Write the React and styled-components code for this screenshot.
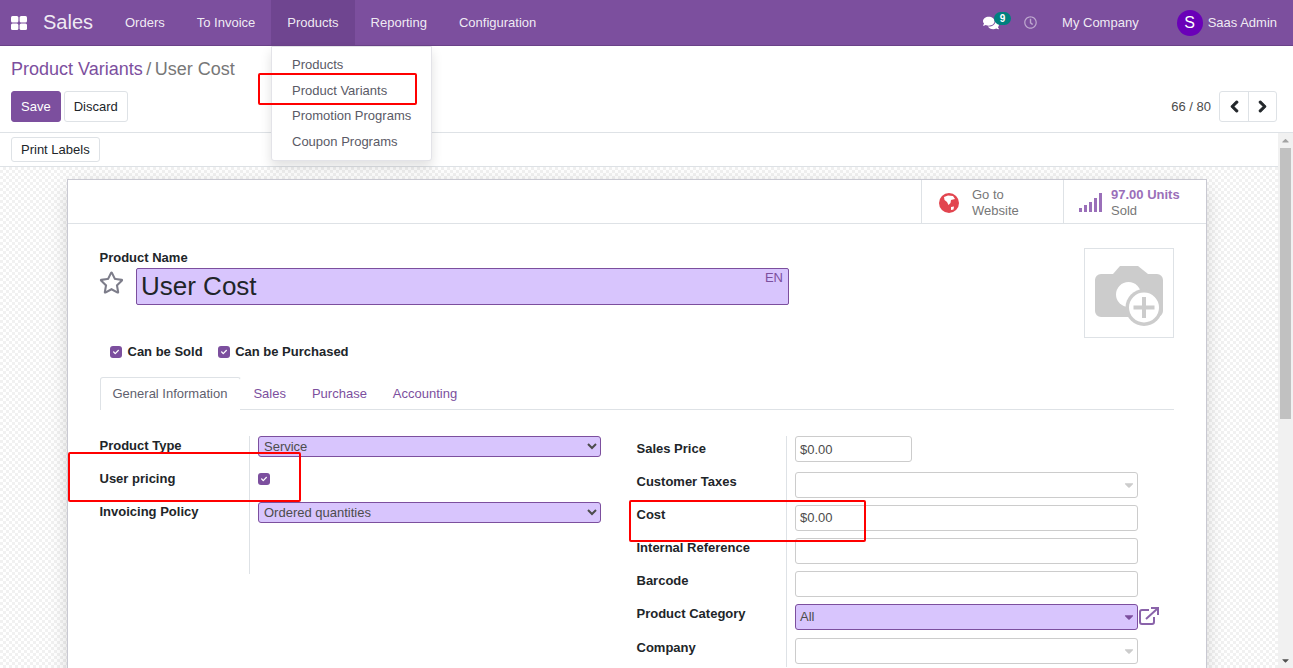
import styled, { createGlobalStyle } from 'styled-components'
import { FaComments, FaRegClock, FaChevronLeft, FaChevronRight, FaCheck, FaCaretDown, FaCaretUp, FaRegStar } from 'react-icons/fa'

const GlobalStyle = createGlobalStyle`
  html, body {
    margin: 0;
    height: 100%;
    overflow: hidden;
  }
  body {
    font-family: "Liberation Sans", Arial, sans-serif;
    font-size: 13px;
    color: #4c4c4c;
  }
  * { box-sizing: border-box; }
`

const Page = styled.div`
  position: relative;
  width: 1293px;
  height: 668px;
  display: flex;
  flex-direction: column;
  overflow: hidden;
  background: #fff;
`

const Navbar = styled.header`
  flex: none;
  height: 46px;
  display: flex;
  align-items: stretch;
  padding-left: 11px;
  background: #7c4f9e;
  border-bottom: 1px solid #6a4288;
  color: rgba(255, 255, 255, 0.9);
`

const AppsIcon = styled.svg`
  align-self: center;
  width: 16px;
  height: 14px;
  margin-right: 16px;
`

const Brand = styled.div`
  align-self: center;
  width: 66px;
  font-size: 20px;
`

const NavItem = styled.div`
  display: flex;
  align-items: center;
  padding: 0 16px;
  background: ${(props) => (props.active ? '#6f4590' : 'transparent')};
`

const NavRight = styled.div`
  margin-left: auto;
  display: flex;
  align-items: center;
  padding-right: 16px;
`

const ChatIcon = styled.div`
  position: relative;
  display: flex;
  width: 16px;
  margin-right: 25px;
  color: #fff;
  font-size: 16px;
`

const Badge = styled.span`
  position: absolute;
  top: -3px;
  left: 11px;
  width: 17px;
  height: 13px;
  border-radius: 7px;
  background: #00807f;
  color: #fff;
  font-size: 10px;
  font-weight: 700;
  line-height: 13px;
  text-align: center;
`

const ClockIcon = styled.div`
  display: flex;
  margin-right: 25px;
  color: rgba(255, 255, 255, 0.5);
  font-size: 13px;
`

const Company = styled.div`
  margin-right: 38px;
`

const Avatar = styled.div`
  width: 26px;
  height: 26px;
  margin-right: 5px;
  border-radius: 50%;
  background: #6a00b8;
  color: #fff;
  font-size: 16px;
  line-height: 26px;
  text-align: center;
`

const ControlPanel = styled.div`
  flex: none;
  height: 87px;
  padding: 12px 16px 10px 11px;
  border-bottom: 1px solid #dee2e6;
`

const Breadcrumb = styled.div`
  height: 33px;
  font-size: 18px;
  line-height: 22px;
  color: #777;
`

const CrumbLink = styled.span`
  color: #7c4f9e;
`

const CrumbSep = styled.span`
  margin: 0 3.5px;
`

const PanelRow = styled.div`
  display: flex;
  align-items: center;
  gap: 3px;
`

const Button = styled.button`
  height: ${(props) => (props.short ? '25px' : '31px')};
  padding: 0 9px;
  border: 1px solid ${(props) => (props.primary ? '#7c4f9e' : '#dee2e6')};
  border-radius: 3px;
  background: ${(props) => (props.primary ? '#7c4f9e' : '#fff')};
  color: ${(props) => (props.primary ? '#fff' : '#212529')};
  font-family: inherit;
  font-size: 13px;
`

const Pager = styled.div`
  margin-left: auto;
  display: flex;
  align-items: center;
`

const PagerValue = styled.span`
  margin-right: 8px;
`

const PagerButtons = styled.div`
  display: flex;
  height: 31px;
  border: 1px solid #dee2e6;
  border-radius: 3px;
`

const PagerButton = styled.div`
  width: 28px;
  display: flex;
  align-items: center;
  justify-content: center;
  color: #212529;
  font-size: 13px;
  & + & {
    border-left: 1px solid #dee2e6;
  }
  svg {
    stroke: currentColor;
    stroke-width: 40px;
  }
`

const ScrollBody = styled.div`
  flex: 1;
  min-height: 0;
  display: flex;
`

const ScrollContent = styled.div`
  flex: 1;
  min-width: 0;
  display: flex;
  flex-direction: column;
  overflow: hidden;
`

const ActionBar = styled.div`
  flex: none;
  height: 34px;
  padding: 4px 11px;
  border-bottom: 1px solid #dee2e6;
`

const Backdrop = styled.div`
  flex: 1;
  padding: 12px 71px 0 67px;
  background-color: #fff;
  background-image: repeating-conic-gradient(#f1f1f1 0 25%, #fff 0 50%);
  background-size: 6px 6px;
`

const Sheet = styled.div`
  width: 1140px;
  height: 600px;
  background: #fff;
  border: 1px solid #c9c9d2;
  box-shadow: 0 5px 20px -5px rgba(0, 0, 0, 0.25);
`

const ButtonBox = styled.div`
  height: 44px;
  display: flex;
  justify-content: flex-end;
  border-bottom: 1px solid #dee2e6;
`

const StatButton = styled.div`
  width: ${(props) => props.width}px;
  display: flex;
  align-items: center;
  border-left: 1px solid #dee2e6;
  padding-left: ${(props) => props.inset}px;
  padding-top: 2px;
  color: #777;
  line-height: 16px;
`

const StatIcon = styled.div`
  display: flex;
  width: ${(props) => props.width}px;
  flex: none;
`

const StatValue = styled.div`
  color: #9a6fb9;
  font-weight: 700;
`

const SheetBody = styled.div`
  padding: 24px 32px 0;
`

const TitleRow = styled.div`
  display: flex;
  justify-content: space-between;
  height: 91px;
`

const NameLabel = styled.div`
  margin: 1px 0 0 -0.5px;
  color: #212529;
  font-weight: 700;
  line-height: 18px;
`

const NameRow = styled.div`
  display: flex;
  margin-top: 1px;
`

const StarIcon = styled.div`
  display: flex;
  width: 36px;
  padding-top: 2px;
  margin-left: -1px;
  margin-right: 1px;
  color: #7d7d8a;
  font-size: 25px;
`

const NameField = styled.div`
  position: relative;
  display: flex;
`

const NameInput = styled.input`
  width: 653px;
  height: 37px;
  padding: 0 4px;
  border: 1px solid #7c4f9e;
  border-radius: 2px;
  background: #d8c5fd;
  color: #212529;
  font-family: inherit;
  font-size: 26px;
  outline: none;
`

const LangTag = styled.span`
  position: absolute;
  top: 2px;
  right: 6px;
  color: #7c4f9e;
  font-size: 13px;
`

const ImageBox = styled.div`
  width: 90px;
  height: 90px;
  display: flex;
  align-items: center;
  justify-content: center;
  border: 1px solid #dee2e6;
`

const CheckRow = styled.div`
  display: flex;
  align-items: flex-start;
  gap: 15px;
  padding-left: 10px;
  height: 38px;
`

const CheckLabel = styled.label`
  display: flex;
  align-items: center;
  gap: 5.5px;
  height: 25px;
  color: #212529;
  font-weight: 700;
`

const CheckBox = styled.span`
  width: 12px;
  height: 12px;
  display: flex;
  align-items: center;
  justify-content: center;
  border-radius: 3px;
  background: #7c4f9e;
  color: #fff;
  font-size: 6px;
`

const Tabs = styled.div`
  display: flex;
  height: 33px;
  border-bottom: 1px solid #dee2e6;
`

const Tab = styled.div`
  display: flex;
  align-items: center;
  padding: ${(props) => (props.active ? '0 12.5px 1px 11.5px' : '0 12px')};
  height: ${(props) => (props.active ? '33px' : '32px')};
  color: ${(props) => (props.active ? '#5f5f6e' : '#7c4f9e')};
  background: #fff;
  border: 1px solid ${(props) => (props.active ? '#dee2e6' : 'transparent')};
  border-bottom: 0;
  border-radius: 3px 3px 0 0;
`

const TabLink = styled(Tab)`
  position: relative;
  left: -0.5px;
`

const Groups = styled.div`
  display: flex;
  margin-top: 26px;
`

const Group = styled.div`
  display: grid;
  grid-template-columns: 149px auto;
  grid-auto-rows: 33px;
  width: ${(props) => props.width}px;
  margin-right: ${(props) => props.gap || 0}px;
`

const FieldLabel = styled.div`
  margin-left: -0.5px;
  color: #212529;
  font-weight: 700;
  line-height: 16px;
  padding-top: ${(props) => props.offset}px;
`

const FieldCell = styled.div`
  position: relative;
  display: flex;
  align-items: flex-start;
  padding-left: 8px;
  padding-top: ${(props) => props.offset || 0}px;
  border-left: 1px solid #dee2e6;
`

const GroupFiller = styled(FieldCell)`
  grid-column: 2;
  height: 39px;
`

const NativeSelect = styled.select`
  width: 343px;
  height: 21px;
  padding: 0 0 0 1px;
  border: 1px solid #7c4f9e;
  border-radius: 3px;
  background: #d8c5fd;
  color: #4c4c4c;
  font-family: inherit;
  font-size: 13px;
`

const TextField = styled.div`
  position: relative;
  display: flex;
  align-items: center;
  width: ${(props) => props.width || 343}px;
  height: 26px;
  padding: ${(props) => (props.lifted ? '0 4px 2px' : '0 4px')};
  border: 1px solid ${(props) => (props.required ? '#7c4f9e' : '#ccc')};
  border-radius: 3px;
  background: ${(props) => (props.required ? '#d8c5fd' : '#fff')};
  color: #4c4c4c;
`

const ComboCaret = styled.span`
  position: absolute;
  right: 1px;
  top: 5px;
  display: flex;
  color: ${(props) => (props.required ? '#7c4f9e' : '#ccc')};
  font-size: 14px;
`

const ExternalLink = styled.svg`
  position: absolute;
  left: 352px;
  top: 6px;
  width: 20px;
  height: 18px;
`

const Dropdown = styled.div`
  position: absolute;
  left: 271px;
  top: 46px;
  width: 161px;
  height: 115px;
  padding-top: 5px;
  background: #fff;
  border: 1px solid #e3e3e8;
  border-radius: 0 0 3px 3px;
  box-shadow: 0 6px 12px rgba(0, 0, 0, 0.12);
  z-index: 3;
`

const DropdownItem = styled.div`
  padding-left: 20px;
  height: 25.5px;
  line-height: 25px;
  color: #5a5a66;
`

const Callout = styled.div`
  position: absolute;
  left: ${(props) => props.x}px;
  top: ${(props) => props.y}px;
  width: ${(props) => props.w}px;
  height: ${(props) => props.h}px;
  border: 2px solid #f00;
  border-radius: 2px;
  z-index: 4;
  pointer-events: none;
`

const Scrollbar = styled.div`
  flex: none;
  width: 15px;
  display: flex;
  flex-direction: column;
  align-items: center;
  background: #f1f1f1;
  font-size: 11px;
`

const ScrollButton = styled.div`
  flex: none;
  height: 15px;
  display: flex;
  align-items: center;
  justify-content: center;
  color: ${(props) => (props.disabled ? '#a3a3a3' : '#505050')};
`

const ScrollTrack = styled.div`
  flex: 1;
  width: 100%;
`

const ScrollThumb = styled.div`
  height: 271px;
  margin: 0 2px;
  background: #c1c1c1;
`

const rightRows = [
  { label: 'Sales Price', value: '$0.00', width: 117, offset: 0 },
  { label: 'Customer Taxes', combo: true },
  { label: 'Cost', value: '$0.00', lifted: true },
  { label: 'Internal Reference' },
  { label: 'Barcode' },
  { label: 'Product Category', value: 'All', combo: true, required: true, lifted: true },
  { label: 'Company', combo: true, offset: 4, labelOffset: 6 },
]

function Check() {
  return (
    <CheckBox>
      <FaCheck />
    </CheckBox>
  )
}

function FieldRow({ label, value, width, combo, required, lifted, offset = 3, labelOffset = 5 }) {
  return (
    <>
      <FieldLabel offset={labelOffset}>{label}</FieldLabel>
      <FieldCell offset={offset}>
        <TextField width={width} required={required} lifted={lifted}>
          {value}
          {combo && (
            <ComboCaret required={required}>
              <FaCaretDown />
            </ComboCaret>
          )}
        </TextField>
        {required && (
          <ExternalLink viewBox="0 0 20 18" fill="none" stroke="#8a63aa" strokeWidth="2">
            <path d="M10 3H3a2 2 0 0 0-2 2v10a2 2 0 0 0 2 2h10a2 2 0 0 0 2-2v-5" />
            <path d="M7 12L18 2M12 1h7v7" />
          </ExternalLink>
        )}
      </FieldCell>
    </>
  )
}

function App() {
  return (
    <Page>
      <GlobalStyle />
      <Navbar>
        <AppsIcon viewBox="0 0 16 14">
          <rect x="0" y="0" width="7.4" height="6.4" rx="1.5" fill="#fff" />
          <rect x="8.6" y="0" width="7.4" height="6.4" rx="1.5" fill="#fff" />
          <rect x="0" y="7.6" width="7.4" height="6.4" rx="1.5" fill="#fff" />
          <rect x="8.6" y="7.6" width="7.4" height="6.4" rx="1.5" fill="#fff" />
        </AppsIcon>
        <Brand>Sales</Brand>
        <NavItem>Orders</NavItem>
        <NavItem>To Invoice</NavItem>
        <NavItem active>Products</NavItem>
        <NavItem>Reporting</NavItem>
        <NavItem>Configuration</NavItem>
        <NavRight>
          <ChatIcon>
            <FaComments />
            <Badge>9</Badge>
          </ChatIcon>
          <ClockIcon>
            <FaRegClock />
          </ClockIcon>
          <Company>My Company</Company>
          <Avatar>S</Avatar>
          Saas Admin
        </NavRight>
      </Navbar>
      <Dropdown>
        <DropdownItem>Products</DropdownItem>
        <DropdownItem>Product Variants</DropdownItem>
        <DropdownItem>Promotion Programs</DropdownItem>
        <DropdownItem>Coupon Programs</DropdownItem>
      </Dropdown>
      <ControlPanel>
        <Breadcrumb>
          <CrumbLink>Product Variants</CrumbLink>
          <CrumbSep>/</CrumbSep>
          User Cost
        </Breadcrumb>
        <PanelRow>
          <Button primary>Save</Button>
          <Button>Discard</Button>
          <Pager>
            <PagerValue>66 / 80</PagerValue>
            <PagerButtons>
              <PagerButton>
                <FaChevronLeft />
              </PagerButton>
              <PagerButton>
                <FaChevronRight />
              </PagerButton>
            </PagerButtons>
          </Pager>
        </PanelRow>
      </ControlPanel>
      <ScrollBody>
        <ScrollContent>
          <ActionBar>
            <Button short>Print Labels</Button>
          </ActionBar>
          <Backdrop>
            <Sheet>
              <ButtonBox>
                <StatButton width={142} inset={17}>
                  <StatIcon width={33}>
                    <svg width="20" height="20" viewBox="0 0 20 20">
                      <circle cx="10" cy="10" r="10" fill="#e2454f" />
                      <path d="M5 4L9 2.5L14 3L16 6L12 7L11.5 10L9.5 12L8 9L5.5 7Z" fill="#fff" />
                      <path d="M12 14L15 13.5L14.5 16.5L12 17Z" fill="#fff" />
                    </svg>
                  </StatIcon>
                  <div>
                    Go to
                    <br />
                    Website
                  </div>
                </StatButton>
                <StatButton width={143} inset={15}>
                  <StatIcon width={32}>
                    <svg width="23" height="20" viewBox="0 0 23 20" fill="#9a6fb9">
                      <rect x="0" y="15" width="3" height="4" />
                      <rect x="5" y="12" width="3" height="7" />
                      <rect x="10" y="9" width="3" height="10" />
                      <rect x="15" y="5" width="3" height="14" />
                      <rect x="20" y="0" width="3" height="19" />
                    </svg>
                  </StatIcon>
                  <div>
                    <StatValue>97.00 Units</StatValue>
                    Sold
                  </div>
                </StatButton>
              </ButtonBox>
              <SheetBody>
                <TitleRow>
                  <div>
                    <NameLabel>Product Name</NameLabel>
                    <NameRow>
                      <StarIcon>
                        <FaRegStar />
                      </StarIcon>
                      <NameField>
                        <NameInput defaultValue="User Cost" />
                        <LangTag>EN</LangTag>
                      </NameField>
                    </NameRow>
                  </div>
                  <ImageBox>
                    <svg width="70" height="66" viewBox="0 0 70 66">
                      <path
                        d="M7 14h12l7-8h18l10 8h9a6 6 0 0 1 6 6v31a6 6 0 0 1-6 6H7a6 6 0 0 1-6-6V20a6 6 0 0 1 6-6z"
                        fill="#ccc"
                      />
                      <circle cx="34.5" cy="34.5" r="12.5" fill="#fff" />
                      <circle cx="50" cy="47.5" r="18.5" fill="#ccc" />
                      <circle cx="50" cy="47.5" r="15" fill="#fff" />
                      <rect x="48" y="37" width="4" height="21" fill="#ccc" />
                      <rect x="39.5" y="45.5" width="21" height="4" fill="#ccc" />
                    </svg>
                  </ImageBox>
                </TitleRow>
                <CheckRow>
                  <CheckLabel>
                    <Check />
                    Can be Sold
                  </CheckLabel>
                  <CheckLabel>
                    <Check />
                    Can be Purchased
                  </CheckLabel>
                </CheckRow>
                <Tabs>
                  <Tab active>General Information</Tab>
                  <TabLink>Sales</TabLink>
                  <TabLink>Purchase</TabLink>
                  <TabLink>Accounting</TabLink>
                </Tabs>
                <Groups>
                  <Group width={501} gap={36}>
                    <FieldLabel offset={2}>Product Type</FieldLabel>
                    <FieldCell>
                      <NativeSelect defaultValue="Service">
                        <option>Service</option>
                      </NativeSelect>
                    </FieldCell>
                    <FieldLabel offset={2}>User pricing</FieldLabel>
                    <FieldCell offset={4}>
                      <Check />
                    </FieldCell>
                    <FieldLabel offset={2}>Invoicing Policy</FieldLabel>
                    <FieldCell>
                      <NativeSelect defaultValue="Ordered quantities">
                        <option>Ordered quantities</option>
                      </NativeSelect>
                    </FieldCell>
                    <GroupFiller />
                  </Group>
                  <Group width={520}>
                    {rightRows.map((row) => (
                      <FieldRow key={row.label} {...row} />
                    ))}
                  </Group>
                </Groups>
              </SheetBody>
            </Sheet>
          </Backdrop>
        </ScrollContent>
        <Scrollbar>
          <ScrollButton disabled>
            <FaCaretUp />
          </ScrollButton>
          <ScrollTrack>
            <ScrollThumb />
          </ScrollTrack>
          <ScrollButton>
            <FaCaretDown />
          </ScrollButton>
        </Scrollbar>
      </ScrollBody>
      <Callout x={258} y={73} w={159} h={32} />
      <Callout x={68} y={452} w={233} h={50} />
      <Callout x={629} y={500} w={237} h={42} />
    </Page>
  )
}

export default App
